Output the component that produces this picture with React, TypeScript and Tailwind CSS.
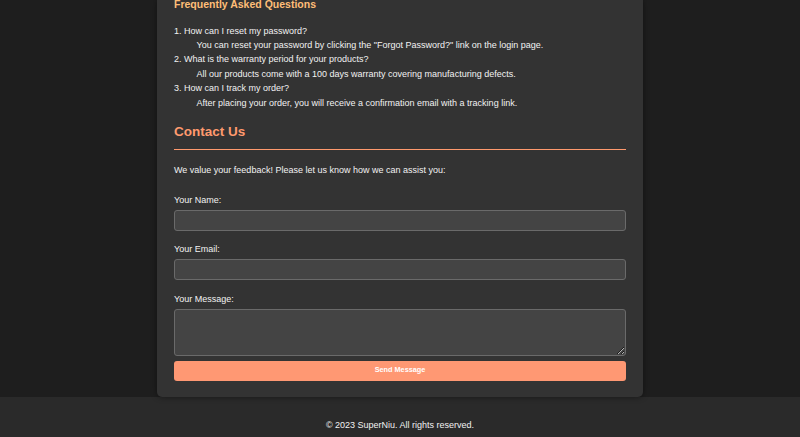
import React from "react";

const faqs = [
  {
    q: "1. How can I reset my password?",
    a: 'You can reset your password by clicking the "Forgot Password?" link on the login page.',
  },
  {
    q: "2. What is the warranty period for your products?",
    a: "All our products come with a 100 days warranty covering manufacturing defects.",
  },
  {
    q: "3. How can I track my order?",
    a: "After placing your order, you will receive a confirmation email with a tracking link.",
  },
];

export default function App() {
  return (
    <div
      className="min-h-[437px] bg-[#1e1e1e] text-[#f2f2f2] overflow-hidden"
      style={{ fontFamily: '"Liberation Sans", Arial, Helvetica, sans-serif' }}
    >
      <main className="flex justify-center">
        <div className="w-[486px] bg-[#333333] rounded-b-[5px] px-[17px] pb-[16.5px] shadow-[0_0_6px_rgba(0,0,0,0.45)]">
          <h3 className="-mt-[2px] text-[10.5px] leading-[12px] font-bold text-[#ffbe78]">
            Frequently Asked Questions
          </h3>
          <div className="mt-[13.5px] text-[9px] leading-[14.4px]">
            {faqs.map((f) => (
              <div key={f.q}>
                <div>{f.q}</div>
                <div className="pl-[22.5px]">{f.a}</div>
              </div>
            ))}
          </div>

          <h2 className="mt-[14px] text-[13.5px] leading-[16px] font-bold text-[#ff9a6e] pb-[9px] border-b border-[#ff9a6e]">
            Contact Us
          </h2>
          <p className="mt-[12.6px] text-[9px] leading-[14px]">
            We value your feedback! Please let us know how we can assist you:
          </p>

          <form className="flex flex-col" onSubmit={(e) => e.preventDefault()}>
            <label className="mt-[16px] text-[9px] leading-[14px]">Your Name:</label>
            <input
              type="text"
              className="mt-[3.6px] h-[21px] w-full rounded-[3px] border border-[#6a6a6a] bg-[#444444] outline-none"
            />
            <label className="mt-[11.3px] text-[9px] leading-[14px]">Your Email:</label>
            <input
              type="email"
              className="mt-[3px] h-[21px] w-full rounded-[3px] border border-[#6a6a6a] bg-[#444444] outline-none"
            />
            <label className="mt-[11.3px] text-[9px] leading-[14px]">Your Message:</label>
            <textarea className="mt-[3px] h-[47px] w-full rounded-[3px] border border-[#6a6a6a] bg-[#444444] outline-none block" />
            <button
              type="submit"
              className="mt-[5px] h-[20px] w-full rounded-[3px] bg-[#ff9873] text-white text-[7.3px] font-bold"
            >
              Send Message
            </button>
          </form>
        </div>
      </main>
      <footer className="bg-[#2a2a2a] h-[60px] pt-[21px] text-center text-[9px] leading-[14px] text-[#f2f2f2]">
        © 2023 SuperNiu. All rights reserved.
      </footer>
    </div>
  );
}
